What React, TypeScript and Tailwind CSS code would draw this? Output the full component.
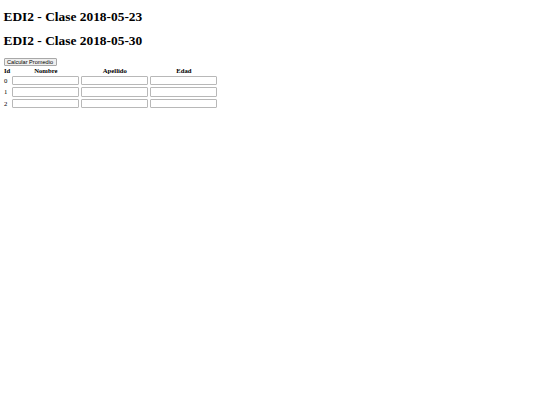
const ROWS = [0, 1, 2];

function Cell() {
  return (
    <td className="p-[0.5px]">
      <input
        type="text"
        className="block h-[9.5px] w-[67px] rounded-[1px] border border-[#b8b8b8] bg-white"
      />
    </td>
  );
}

export default function App() {
  return (
    <div className="min-h-[405px] w-[540px] bg-white px-[3.5px] pb-[4px] pt-px font-['Liberation_Serif',serif] text-black">
      <h1 className="mb-[9px] mt-[8px] text-[13.4px] font-bold leading-[15.4px]">EDI2 - Clase 2018-05-23</h1>
      <h1 className="my-[9px] text-[13.4px] font-bold leading-[15.4px]">EDI2 - Clase 2018-05-30</h1>

      <button
        type="button"
        className="block h-[8.5px] rounded-[1px] border border-[#a8a8a8] bg-[#efefef] px-[2.5px] font-['Liberation_Sans',sans-serif] text-[5.6px] leading-[6px] text-black"
      >
        Calcular Promedio
      </button>

      <table className="-ml-px border-separate border-spacing-[1px] text-[6.7px] leading-[7.7px]">
        <thead>
          <tr>
            <th className="px-[0.5px] py-0 font-bold leading-[7px]">Id</th>
            <th className="px-[0.5px] py-0 font-bold leading-[7px]">Nombre</th>
            <th className="px-[0.5px] py-0 font-bold leading-[7px]">Apellido</th>
            <th className="px-[0.5px] py-0 font-bold leading-[7px]">Edad</th>
          </tr>
        </thead>
        <tbody>
          {ROWS.map((id) => (
            <tr key={id}>
              <td className="p-[0.5px] pr-[1px]">{id}</td>
              <Cell />
              <Cell />
              <Cell />
            </tr>
          ))}
        </tbody>
      </table>
    </div>
  );
}
